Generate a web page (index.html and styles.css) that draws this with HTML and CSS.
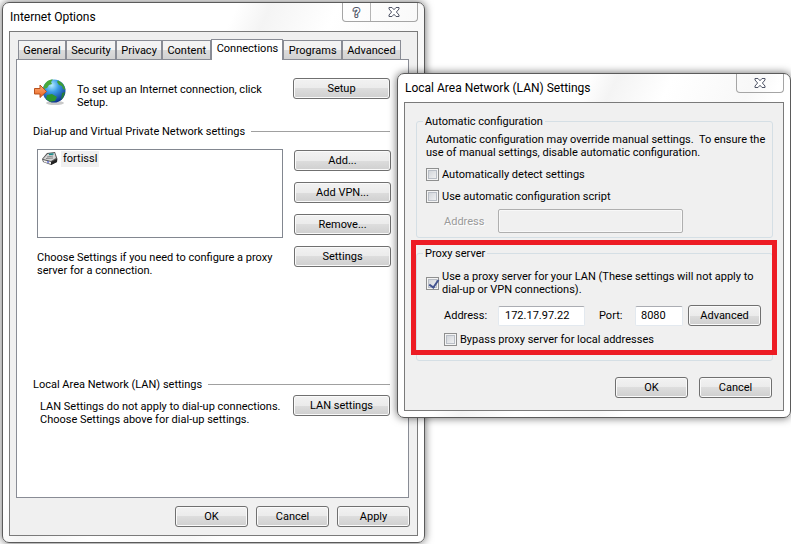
FILE: index.html
```html
<!DOCTYPE html>
<html lang="en">
<head>
  <meta charset="UTF-8" />
  <meta name="viewport" content="width=device-width, initial-scale=1.0"/>
  <title>Internet Options</title>
  <link rel="stylesheet" href="styles.css">
</head>
<body>
  <main class="desktop">
    <section class="window window-options">
      <header class="titlebar">
        <h1 class="title">Internet Options</h1>
        <div class="caption-buttons">
          <button type="button" class="caption-btn caption-help" aria-label="Help">?</button>
          <button type="button" class="caption-btn caption-close" aria-label="Close">
            <svg width="12" height="10" viewBox="0 0 12 10"><path d="M1 .5H4L6 2.7 8 .5H11V2L8.4 5 11 8V9.5H8L6 7.3 4 9.5H1V8L3.6 5 1 2Z" fill="#fff" stroke="#4e5365"/></svg>
          </button>
        </div>
      </header>
      <div class="client">
        <nav class="tabs">
          <button type="button" class="tab">General</button>
          <button type="button" class="tab">Security</button>
          <button type="button" class="tab">Privacy</button>
          <button type="button" class="tab">Content</button>
          <button type="button" class="tab active">Connections</button>
          <button type="button" class="tab">Programs</button>
          <button type="button" class="tab">Advanced</button>
        </nav>
        <div class="panel">
          <div class="row setup">
            <svg class="globe" width="32" height="28" viewBox="0 0 32 28">
              <defs>
                <radialGradient id="sea" cx=".4" cy=".25" r=".75">
                  <stop offset="0" stop-color="#b5ecff"/>
                  <stop offset=".4" stop-color="#3c9de6"/>
                  <stop offset="1" stop-color="#0d3592"/>
                </radialGradient>
                <linearGradient id="arrow" x2="0" y2="1">
                  <stop offset="0" stop-color="#ffb27a"/>
                  <stop offset="1" stop-color="#e9601c"/>
                </linearGradient>
              </defs>
              <ellipse cx="21" cy="25" rx="9" ry="2" fill="#c9c9c9"/>
              <circle cx="20" cy="13" r="11.5" fill="url(#sea)"/>
              <path d="M9.500 9C11 4 15 1.500 19 1.600L17 4 18 6 15 7 13 10 10 11Z" fill="#4aa83a"/>
              <path d="M24 2.500C28 4 31 8 31.300 12L29 11 28 8 25 7 23 4Z" fill="#3f9d36"/>
              <path d="M13 17L18 16 23 19 21 23 16 23.700 12 21Z" fill="#2e962e"/>
              <path d="M28 15L31 14C30.500 18 29 20 27 22Z" fill="#257c3b"/>
              <path d="M.5 10.500H6V7L12.500 13.500 6 19.500V16H.5Z" fill="url(#arrow)" stroke="#b9501d"/>
            </svg>
            <p class="text">To set up an Internet connection, click Setup.</p>
            <button type="button" class="btn">Setup</button>
          </div>

          <h2 class="section-title">Dial-up and Virtual Private Network settings</h2>
          <div class="row dialup">
            <div class="dialup-left">
              <ul class="listbox">
                <li class="list-item">
                  <svg width="16" height="14" viewBox="0 0 16 14">
                    <path d="M0 7L5 1 13 0 15.500 7 15 10 9 13 1 10Z" fill="#555"/>
                    <path d="M1 7L5.500 2 12.500 1 14 6 9 9Z" fill="#d5d5d5"/>
                    <path d="M1 8L9 10V12L2 10Z" fill="#f2f2f2"/>
                    <path d="M7 2.500L11.500 2" stroke="#138c8c" stroke-width="1.500"/>
                    <path d="M5 5L11 4M4 6.500L11 6" stroke="#888"/>
                    <path d="M9 10L15 7V10L9 13Z" fill="#222"/>
                    <path d="M5 10H7" stroke="#2438c8"/>
                  </svg>
                  <span class="list-label">fortissl</span>
                </li>
              </ul>
              <p class="text">Choose Settings if you need to configure a proxy server for a connection.</p>
            </div>
            <div class="btn-column">
              <button type="button" class="btn">Add...</button>
              <button type="button" class="btn">Add VPN...</button>
              <button type="button" class="btn">Remove...</button>
              <button type="button" class="btn">Settings</button>
            </div>
          </div>

          <h2 class="section-title lan-title">Local Area Network (LAN) settings</h2>
          <div class="row lan">
            <p class="text">LAN Settings do not apply to dial-up connections. Choose Settings above for dial-up settings.</p>
            <button type="button" class="btn">LAN settings</button>
          </div>
        </div>
        <footer class="actions">
          <button type="button" class="btn btn-small">OK</button>
          <button type="button" class="btn btn-small">Cancel</button>
          <button type="button" class="btn btn-small">Apply</button>
        </footer>
      </div>
    </section>

    <section class="window window-lan">
      <header class="titlebar">
        <h1 class="title">Local Area Network (LAN) Settings</h1>
        <div class="caption-buttons">
          <button type="button" class="caption-btn caption-close" aria-label="Close">
            <svg width="12" height="10" viewBox="0 0 12 10"><path d="M1 .5H4L6 2.7 8 .5H11V2L8.4 5 11 8V9.5H8L6 7.3 4 9.5H1V8L3.600 5 1 2Z" fill="#fff" stroke="#4e5365"/></svg>
          </button>
        </div>
      </header>
      <form class="client">
        <fieldset class="group group-auto">
          <legend>Automatic configuration</legend>
          <p class="text">Automatic configuration may override manual settings.&nbsp; To ensure the use of manual settings, disable automatic configuration.</p>
          <div class="check">
            <input type="checkbox" id="detect">
            <label for="detect">Automatically detect settings</label>
          </div>
          <div class="check">
            <input type="checkbox" id="script">
            <label for="script">Use automatic configuration script</label>
          </div>
          <div class="field disabled">
            <label for="scriptAddress">Address</label>
            <input type="text" class="input" id="scriptAddress" disabled>
          </div>
        </fieldset>

        <fieldset class="group group-proxy">
          <legend>Proxy server</legend>
          <div class="check">
            <input type="checkbox" id="proxy" checked>
            <label for="proxy">Use a proxy server for your LAN (These settings will not apply to dial-up or VPN connections).</label>
          </div>
          <div class="field">
            <label for="address">Address:</label>
            <input type="text" class="input input-address" id="address" value="172.17.97.22">
            <label for="port" class="port-label">Port:</label>
            <input type="text" class="input input-port" id="port" value="8080">
            <button type="button" class="btn btn-small">Advanced</button>
          </div>
          <div class="check bypass">
            <input type="checkbox" id="bypass">
            <label for="bypass">Bypass proxy server for local addresses</label>
          </div>
          <div class="highlight"></div>
        </fieldset>

        <div class="actions">
          <button type="button" class="btn btn-small">OK</button>
          <button type="button" class="btn btn-small">Cancel</button>
        </div>
      </form>
    </section>
  </main>
</body>
</html>
```

FILE: styles.css
```css
* {
  box-sizing: border-box;
}

body {
  margin: 0;
  background-color: #fff;
  color: #000;
  font-family: Roboto, sans-serif;
  font-size: 11px;
  line-height: 13px;
}

h1, h2, p, ul {
  margin: 0;
  padding: 0;
  font-weight: normal;
}

button, input {
  font: inherit;
  color: inherit;
}

.desktop {
  position: relative;
  min-height: 100vh;
  overflow: hidden;
}

/* windows */
.window {
  position: absolute;
  border: 1px solid #5b5b5b;
  border-radius: 7px;
  padding: 0 6px 6px;
  background: linear-gradient(115deg, #fff 35%, #f4f4f4 40%, #fff 50%, #f8f8f8 65%, #fff 70%);
  box-shadow: 0 0 8px rgba(0, 0, 0, 0.6);
}

.window-options {
  top: 2px;
  left: 2px;
  right: 366px;
}

.window-lan {
  top: 73px;
  left: 397px;
  right: 0;
}

.titlebar {
  display: flex;
  justify-content: space-between;
  height: 28px;
  padding-left: 1px;
}

.title {
  font-size: 12px;
  line-height: 28px;
}

.caption-buttons {
  display: flex;
  height: 19px;
  border: 1px solid #a5a5a5;
  border-top: none;
  border-radius: 0 0 4px 4px;
}

.caption-btn {
  display: flex;
  align-items: center;
  justify-content: center;
  width: 46px;
  padding: 0;
  border: none;
  background: none;
}

.caption-help {
  width: 28px;
  border-right: 1px solid #b5b5b5;
  color: #fff;
  font-size: 13px;
  font-weight: bold;
  -webkit-text-stroke: 2px #4e5365;
  paint-order: stroke fill;
}

.client {
  border: 1px solid #7a7a7a;
  background-color: #f0f0f0;
}

/* tabs */
.tabs {
  display: flex;
  align-items: flex-end;
  padding: 7px 16px 0 8px;
}

.tab {
  flex: 1 1 auto;
  height: 19px;
  padding: 0 3px;
  border: 1px solid #898c95;
  border-bottom: none;
  background: linear-gradient(#f3f3f3 50%, #dcdcdc 50%, #d2d2d2);
  white-space: nowrap;
}

.tab.active {
  position: relative;
  height: 21px;
  margin-bottom: -1px;
  padding-bottom: 3px;
  background: #fff;
}

.panel {
  height: 439px;
  margin: 0 8px 0 6px;
  padding: 18px 18px 0 16px;
  border: 1px solid #898c95;
  background-color: #fff;
}

.row {
  display: flex;
  align-items: flex-start;
}

.row .text {
  flex: 1;
}

.setup .text {
  padding: 5px 20px 0 11px;
}

.globe {
  margin-left: 1px;
}

.section-title {
  display: flex;
  align-items: center;
  gap: 6px;
  margin-top: 16px;
  font-size: 11px;
}

.section-title::after {
  content: "";
  flex: 1;
  height: 1px;
  background-color: #a0a0a0;
}

.dialup {
  gap: 11px;
  padding: 11px 0 0 4px;
}

.dialup-left {
  flex: 1;
}

.dialup-left .text {
  padding-top: 13px;
}

.listbox {
  height: 89px;
  padding: 1px 4px;
  border: 1px solid #828790;
  list-style: none;
}

.list-item {
  display: flex;
  align-items: center;
  gap: 3px;
}

.list-label {
  padding: 1px 2px 2px;
  background-color: #f0f0f0;
}

.btn-column {
  display: flex;
  flex-direction: column;
  gap: 11px;
  padding-top: 1px;
  margin-right: -1px;
}

.lan-title {
  margin-top: 101px;
}

.lan {
  padding: 4px 0 0 7px;
}

.lan .text {
  padding-top: 5px;
}

/* buttons */
.btn {
  width: 97px;
  height: 21px;
  padding: 0;
  border: 1px solid #707070;
  border-radius: 3px;
  background: linear-gradient(#f2f2f2, #ebebeb 50%, #dddddd 50%, #cfcfcf);
  box-shadow: inset 0 0 0 1px #fafafa;
}

.btn-small {
  width: 73px;
}

.actions {
  display: flex;
  justify-content: flex-end;
  gap: 8px;
  padding: 8px 7px;
}

/* LAN settings form */
.group {
  position: relative;
  min-width: 0;
  margin: 0 10px 0 11px;
  padding: 5px 4px 0 9px;
  border: 1px solid #d5dfe5;
  border-radius: 3px;
}

.group legend {
  padding: 0 2px;
  margin-left: -3px;
}

.group-auto {
  margin-top: 12px;
  padding-bottom: 4px;
}

.group-proxy {
  margin-top: 9px;
  padding-top: 10px;
  padding-bottom: 14px;
}

.group-auto .check {
  margin-top: 8px;
}

.check {
  display: flex;
  align-items: center;
  gap: 3px;
  min-height: 14px;
}

.check input {
  appearance: none;
  flex: none;
  width: 13px;
  height: 13px;
  margin: 0;
  border: 1px solid #8e8f8f;
  background: linear-gradient(135deg, #cbcfd5, #f6f6f6);
  box-shadow: inset 0 0 0 1px #f4f4f4, inset 0 0 0 2px #b9bec6;
}

.check input:checked::after {
  content: "";
  display: block;
  width: 4px;
  height: 8px;
  margin: 0 0 0 4px;
  border: solid #42528f;
  border-width: 0 2px 2px 0;
  transform: rotate(35deg);
}

.field {
  display: flex;
  align-items: center;
  margin: 6px 0 0 18px;
}

.field label {
  width: 54px;
}

.field.disabled {
  color: #9a9a9a;
  text-shadow: 1px 1px 0 #fff;
}

.input {
  width: 185px;
  height: 24px;
  padding: 0 6px;
  border: 1px solid #e3e9ef;
  border-top-color: #abadb3;
  border-radius: 2px;
  background-color: #fff;
}

.input:disabled {
  border-color: #afafaf;
  background-color: #f0f0f0;
  box-shadow: inset 0 0 0 1px #f8f8f8;
}

.group-proxy .field {
  margin-top: 9px;
}

.input-address {
  width: 87px;
  height: 20px;
}

.input-port {
  width: 48px;
  height: 20px;
  padding: 0 5px;
}

.field .port-label {
  width: 36px;
  margin-left: 14px;
}

.field .btn {
  margin-left: 5px;
}

.bypass {
  margin: 6px 0 0 18px;
}

/* red frame around the proxy settings */
.highlight {
  position: absolute;
  inset: -20px -5px 5px -6px;
  border: 5px solid #ed1c24;
  pointer-events: none;
}

.window-lan .actions {
  gap: 11px;
  padding: 16px 11px 12px;
}
```
